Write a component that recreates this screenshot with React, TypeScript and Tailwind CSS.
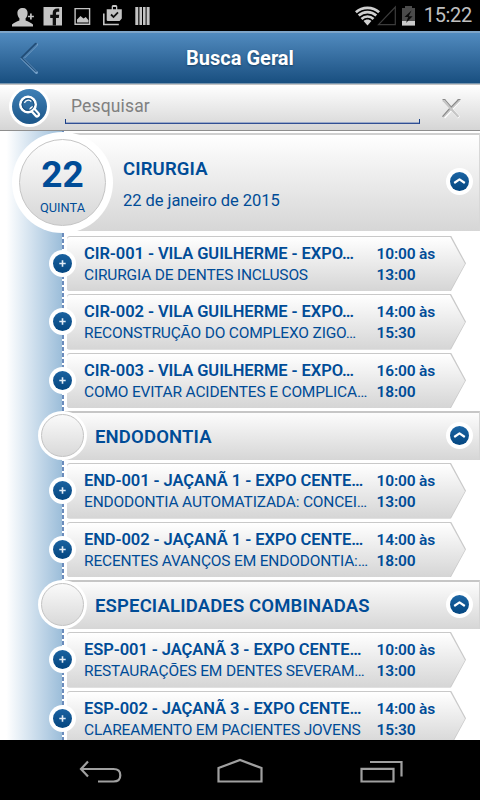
import React from "react";

type Item = { code: string; title: string; from: string; to: string };
type Section = { name: string; items: Item[] };

const sections: Section[] = [
  {
    name: "CIRURGIA",
    items: [
      { code: "CIR-001 - VILA GUILHERME - EXPO…", title: "CIRURGIA DE DENTES INCLUSOS", from: "10:00", to: "13:00" },
      { code: "CIR-002 - VILA GUILHERME - EXPO…", title: "RECONSTRUÇÃO DO COMPLEXO ZIGO…", from: "14:00", to: "15:30" },
      { code: "CIR-003 - VILA GUILHERME - EXPO…", title: "COMO EVITAR ACIDENTES E COMPLICA…", from: "16:00", to: "18:00" },
    ],
  },
  {
    name: "ENDODONTIA",
    items: [
      { code: "END-001 - JAÇANÃ 1 - EXPO CENTE…", title: "ENDODONTIA AUTOMATIZADA: CONCEI…", from: "10:00", to: "13:00" },
      { code: "END-002 - JAÇANÃ 1 - EXPO CENTE…", title: "RECENTES AVANÇOS EM ENDODONTIA:…", from: "14:00", to: "18:00" },
    ],
  },
  {
    name: "ESPECIALIDADES COMBINADAS",
    items: [
      { code: "ESP-001 - JAÇANÃ 3 - EXPO CENTE…", title: "RESTAURAÇÕES EM DENTES SEVERAM…", from: "10:00", to: "13:00" },
      { code: "ESP-002 - JAÇANÃ 3 - EXPO CENTE…", title: "CLAREAMENTO EM PACIENTES JOVENS", from: "14:00", to: "15:30" },
    ],
  },
];

function StatusBar() {
  return (
    <div className="flex h-[31px] shrink-0 items-center bg-black pl-3 pr-[8px]">
      <svg className="h-[22px] w-[144px]" viewBox="0 0 144 22" fill="#c4c4c4">
        <path d="M11 3c3 0 4.600 2 4.600 5 0 2.500-1 4.300-2 5.300v2.200c2.600 1 5.400 2 7.400 4v2H0v-2c2-2 4.800-3 7.400-4v-2.200c-1-1-2-2.800-2-5.300 0-3 2-5 5.600-5z" />
        <path d="M18.900 8.500v6M16 11.500h6" stroke="#000" strokeWidth="3.600" />
        <path d="M18.900 8.500v6M15.900 11.500h6" stroke="#c4c4c4" strokeWidth="1.700" />
        <path d="M31.500 2H50v18.500H31.500z" />
        <path d="M40.700 20.500V13h-2.500v-3.200h2.500V8c0-3 1.700-4.500 4.500-4.500h2v3.200h-1.500c-1.300 0-1.700.6-1.700 1.700v1.400h3.200l-.4 3.200H44v7.500z" fill="#111" />
        <path d="M63.100 3.600h14.500v15.600H63.100z" fill="none" stroke="#c4c4c4" strokeWidth="1.400" />
        <path d="m65 17.500v-3l3.500-3.600 3 2.600 2.300-1.500 2.700 3.300v2.200z" />
        <path d="M91.800 8.500v11h15" fill="none" stroke="#c4c4c4" strokeWidth="1.600" />
        <path d="M94.700 4.300h5V1.700c0-1 .8-1.600 1.800-1.600h2c1 0 1.800.6 1.800 1.600v2.600h4.500v9.200l-2.200 2.500H95.500l-.8-.8zM101 2v2.300h3V2z" fillRule="evenodd" />
        <path d="m99 9.500 2.500 2.500 4.500-4.700" fill="none" stroke="#111" strokeWidth="1.800" />
        <path d="M123.300 2h3v18h-3zM127.400 2h2.600v18h-2.600zM131 2h2.600v18H131zM134.600 2h3v18h-3z" />
      </svg>
      <svg className="ml-[199px] h-[22px] w-[62px]" viewBox="0 0 62 22">
        <g fill="none" stroke="#d0d0d0" strokeWidth="2.700">
          <path d="M.900 7.300c6.400-6 16.800-6 23.200 0M3.700 10.600c5-4.600 12.600-4.600 17.600 0M6.500 13.900c3.400-3.200 8.600-3.200 12 0" />
        </g>
        <path d="M8.600 16.100c2.200-2 5.600-2 7.800 0l-3.900 4.400z" fill="#d0d0d0" />
        <path d="M23.500 19.600 40.300 2v17.600z" fill="none" stroke="#3c3c3c" strokeWidth="1.200" />
        <path d="M47 3h3V1h7v2h3v17.500H47z" fill="#4b4b4b" />
        <path d="M47 16h13v4.500H47z" fill="#cbcbcb" />
        <path d="m56.500 5.500-7 6.500h3.700L51 18l6.600-6.800h-3.900z" fill="#0b0b0b" />
      </svg>
      <span className="ml-auto text-[20px] leading-[31px] tracking-[-0.300px] text-[#c0c0c0]">15:22</span>
    </div>
  );
}

function Header() {
  return (
    <div className="grid h-[53px] shrink-0 grid-cols-[60px_1fr_60px] items-center border-t-2 border-b border-t-[#7ea5c8] border-b-[#7794ad] bg-linear-to-b from-[#518bbf] to-[#184f80]">
      <svg className="ml-[19px] h-[34px] w-[22px]" viewBox="0 0 22 34" fill="none">
        <path d="M17.500 3.500 3.500 17.500l14 14" stroke="#75a0c8" strokeWidth="3" strokeLinecap="round" />
        <path d="M16.800 2.800 3 16.500l13.800 13.200" stroke="#214c76" strokeWidth="2.200" strokeLinecap="round" />
        <path d="m17.300 4-13 13 13 13" stroke="#4679a8" strokeWidth="1.200" />
      </svg>
      <h1 className="text-center text-[20px] font-bold leading-[24px] text-white [text-shadow:0_1px_2px_#153f66]">Busca Geral</h1>
    </div>
  );
}

function SearchBar() {
  return (
    <div className="flex h-[47px] shrink-0 items-start border-t border-b border-t-[#c3c3c3] border-b-[#8e8e8e] bg-linear-to-b from-white to-[#d5d5d5] pl-[9px]">
      <div className="mt-px flex size-[41px] items-center justify-center rounded-full bg-white">
        <div className="flex size-[35px] items-center justify-center rounded-full bg-linear-to-b from-[#3f80b6] to-[#1b5689]">
          <svg className="size-[25px]" viewBox="0 0 25 25" fill="none">
            <path d="m15.500 15.500 4.500 5" stroke="#fff" strokeWidth="6" strokeLinecap="round" />
            <circle cx="11" cy="10.500" r="7.700" stroke="#fff" strokeWidth="2.600" />
            <circle cx="11" cy="10.500" r="5.900" stroke="#1e5280" strokeWidth="1.100" />
            <path d="M7.500 9c.7-2.600 4.500-4 6.800-1.500" stroke="#fff" strokeWidth="1.200" />
            <path d="m17 17 3 3.300" stroke="#225c8e" strokeWidth="1.600" strokeLinecap="round" />
          </svg>
        </div>
      </div>
      <div className="ml-[15px] flex h-[39px] w-[355px] flex-col">
        <span className="mt-[9px] pl-[6px] text-[17.500px] leading-[24px] tracking-[0.150px] text-[#808080]">Pesquisar</span>
        <span className="mt-px h-[6px] w-full border-x border-b border-x-[#173f87] border-b-[#314f93] shadow-[inset_0_-1px_0_#9aa9c8]" />
      </div>
      <svg className="ml-[21px] mt-[13px] h-[22px] w-[20px]" viewBox="0 0 20 22" fill="none">
        <path d="m3 3 15 16.500M18 3 3 19.500" stroke="#fff" strokeWidth="3" />
        <path d="m2 2 15.500 17M18.500 2 2 19" stroke="#c6c6c6" strokeWidth="2.400" />
        <path d="M3.800 1.500 10.300 9 17.500 1.500M8.500 10.700 1.500 18.600M1.500 1.500h3M16.500 1.500h3" stroke="#888" strokeWidth="1.100" />
      </svg>
    </div>
  );
}

function Plus() {
  return (
    <div className="absolute top-[14px] left-[49px] flex size-[27px] items-center justify-center rounded-full bg-white">
      <svg className="size-[19px] rounded-full bg-linear-to-b from-[#1a62a0] to-[#044680]" viewBox="0 0 19 19">
        <path d="M9.500 6.300v6.400M6.300 9.500h6.400" stroke="#e3edf6" strokeWidth="1.600" />
      </svg>
    </div>
  );
}

function Collapse() {
  return (
    <div className="mr-[6px] mb-[3px] flex size-[27px] shrink-0 items-center justify-center rounded-full bg-white">
      <svg className="size-[19px] rounded-full bg-linear-to-b from-[#1b65a4] to-[#044680]" viewBox="0 0 19 19">
        <path d="m4.200 11 5.300-3.600 5.300 3.600" fill="none" stroke="#fff" strokeWidth="2.200" strokeLinejoin="round" />
      </svg>
    </div>
  );
}

function Row({ item }: { item: Item }) {
  return (
    <div className="relative h-[58.500px] pl-[67px]">
      <div className="h-[55.500px] w-[399px] rounded-l-[3px] bg-[#c9c9c9] pt-px [clip-path:polygon(0_0,384px_0,399px_50%,384px_100%,0_100%)]">
        <div className="flex h-full w-[398px] rounded-l-[3px] bg-linear-to-b from-white to-[#d5d5d5] pl-[17px] [clip-path:polygon(0_0,383px_0,398px_50%,383px_100%,0_100%)]">
          <div className="w-[292.500px] shrink-0 whitespace-nowrap pt-[6px]">
            <div className="text-[16.500px] font-semibold leading-[21px] tracking-[-0.070px]">{item.code}</div>
            <div className="text-[15.500px] leading-[22px] tracking-[-0.170px]">{item.title}</div>
          </div>
          <div className="pt-[7px] text-[15.500px] font-semibold leading-[21px] tracking-[-0.150px] whitespace-nowrap">
            <div>{item.from} às</div>
            <div>{item.to}</div>
          </div>
        </div>
      </div>
      <Plus />
    </div>
  );
}

function DayHeader() {
  return (
    <div className="relative mb-[4.600px] pl-[65px]">
      <div className="flex h-[98px] items-center border-t-2 border-r border-t-[#d0d0d0] border-r-[#d8d8d8] bg-linear-to-b from-white to-[#d6d6d6] pl-[58px]">
        <div className="flex-1">
          <div className="mt-[4px] text-[18.500px] font-semibold leading-[26px] tracking-[0.150px]">CIRURGIA</div>
          <div className="mt-[7px] mb-[2px] text-[16.500px] leading-[24px] tracking-[-0.050px]">22 de janeiro de 2015</div>
        </div>
        <Collapse />
      </div>
      <div className="absolute top-[-1px] left-[12px] flex size-[101px] items-center justify-center rounded-full bg-white">
        <div className="flex size-[87px] flex-col items-center rounded-full border border-[#c5c5c5] bg-linear-to-b from-white to-[#d6d6d6]">
          <div className="mt-[14px] text-[37px] font-bold leading-[42px]">22</div>
          <div className="mt-[3px] text-[12.800px] leading-[18px]">QUINTA</div>
        </div>
      </div>
    </div>
  );
}

function SectionHeader({ name }: { name: string }) {
  return (
    <div className="relative h-[52px] pl-[65px]">
      <div className="flex h-[49px] items-center border-t-2 border-r border-t-[#c6c6c6] border-r-[#d5d5d5] bg-linear-to-b from-[#fcfcfc] to-[#d6d6d6] pl-[30px]">
        <div className="flex-1 text-[18.500px] font-semibold leading-[26px] tracking-[0.150px]">{name}</div>
        <Collapse />
      </div>
      <div className="absolute top-0 left-[38px] flex size-[49px] items-center justify-center rounded-full bg-white">
        <div className="size-[43px] rounded-full border border-[#c3c3c3] bg-linear-to-b from-[#fafafa] to-[#d9d9d9]" />
      </div>
    </div>
  );
}

function Timeline() {
  return (
    <div className="relative min-h-0 flex-1 overflow-hidden bg-white text-[#004c97]">
      <div className="absolute inset-y-0 left-0 w-[64px] bg-linear-to-r from-white from-10% to-[#98bbd8]" />
      <div className="absolute inset-y-0 left-[62px] w-[2px] bg-[repeating-linear-gradient(180deg,#6b8cbc_0_4px,#ffffff_4px_6px)]" />
      <div className="relative pt-[2px]">
        {sections.map((section, i) => (
          <section key={section.name}>
            {i === 0 ? <DayHeader /> : <SectionHeader name={section.name} />}
            {section.items.map((item) => (
              <Row key={item.code} item={item} />
            ))}
          </section>
        ))}
      </div>
    </div>
  );
}

function NavBar() {
  return (
    <div className="flex h-[60px] shrink-0 items-start bg-black pt-[17px]">
      <svg className="ml-[78px] h-[28px] w-[44px]" viewBox="0 0 44 28" fill="none" stroke="#a0a0a0" strokeWidth="2.200">
        <path d="M10 4.500 3 12l7 7.500M3 12h32.500c5 0 6.800 3 6.800 6.200 0 3.500-2 6.300-6.800 6.300H20" />
      </svg>
      <svg className="ml-[94px] h-[28px] w-[48px]" viewBox="0 0 48 28" fill="none" stroke="#a0a0a0" strokeWidth="2.200">
        <path d="M2.500 24.500V11L24 3l21.500 8v13.500z" />
      </svg>
      <svg className="ml-[95px] h-[28px] w-[46px]" viewBox="0 0 46 28" fill="none" stroke="#a0a0a0" strokeWidth="2.200">
        <path d="M2.500 11.800h32v12.700h-32zM11 5h31.500v14.500" />
      </svg>
    </div>
  );
}

export default function App() {
  return (
    <div className="flex h-[800px] w-[480px] flex-col overflow-hidden bg-black font-[Roboto,'Noto_Sans',sans-serif]">
      <StatusBar />
      <Header />
      <SearchBar />
      <Timeline />
      <NavBar />
    </div>
  );
}
